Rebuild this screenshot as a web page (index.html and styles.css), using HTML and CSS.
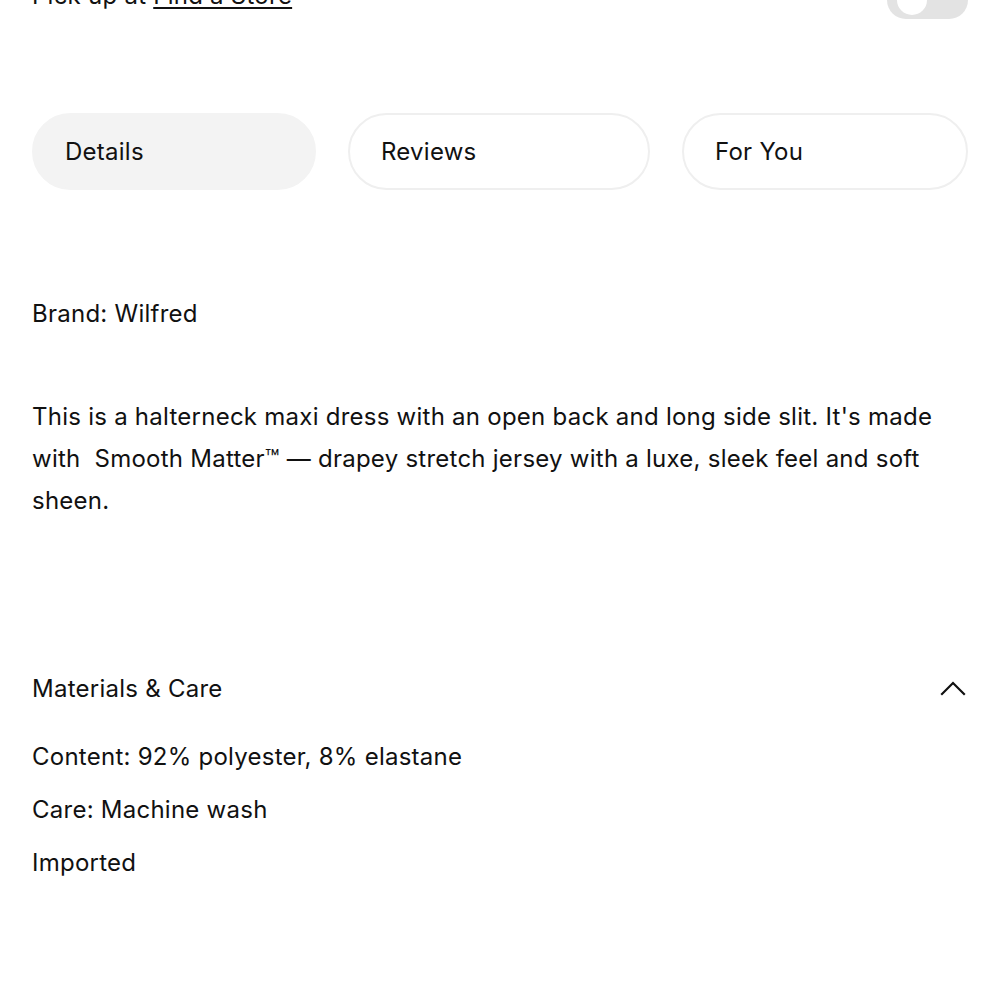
FILE: index.html
```html
<!DOCTYPE html>
<html lang="en">
<head>
<meta charset="utf-8">
<title>Product details</title>
<link rel="stylesheet" href="styles.css">
</head>
<body>
<div class="page">
  <div class="pickup">
    <span class="pickup-text">Pick up at <a class="store-link" href="#">Find a Store</a></span>
    <span class="toggle"><span class="knob"></span></span>
  </div>

  <div class="tabs">
    <button class="tab tab-active tab-details">Details</button>
    <button class="tab tab-reviews">Reviews</button>
    <button class="tab tab-foryou">For You</button>
  </div>

  <p class="brand">Brand: Wilfred</p>

  <p class="desc">This is a halterneck maxi dress with an open back and long side slit. It's made with&nbsp; Smooth Matter™ — drapey stretch jersey with a luxe, sleek feel and soft sheen.</p>

  <div class="accordion">
    <div class="acc-head">
      <span class="acc-title">Materials &amp; Care</span>
      <svg class="chev" width="26" height="16" viewBox="0 0 26 16" aria-hidden="true"><path d="M2 14 L13 3 L24 14" fill="none" stroke="#111" stroke-width="2.2" stroke-linecap="square"/></svg>
    </div>
    <ul class="acc-list">
      <li>Content: 92% polyester, 8% elastane</li>
      <li>Care: Machine wash</li>
      <li>Imported</li>
    </ul>
  </div>
</div>
</body>
</html>
```

FILE: styles.css
```css
* { box-sizing: border-box; }
html, body { margin: 0; padding: 0; background: #fff; }
body {
  font-family: "Inter", "Noto Sans", sans-serif;
  color: #111;
  font-size: 24px;
  letter-spacing: 0.25px;
}
.page {
  padding: 0 32px;
  margin-top: -19px;
}
.pickup {
  display: flex;
  justify-content: space-between;
  align-items: flex-start;
  height: 38px;
}
.pickup-text {
  line-height: 38px;
  margin-top: -4px;
}
.store-link { color: #111; text-decoration: underline; text-underline-offset: 3px; text-decoration-thickness: 2px; }
.toggle {
  width: 81px;
  height: 38px;
  border-radius: 19px;
  background: #e3e3e3;
  padding: 4px 10px;
  display: flex;
}
.knob { width: 30px; height: 30px; border-radius: 50%; background: #fff; }

.tabs {
  display: flex;
  gap: 32px;
  margin-top: 94px;
}
.tab {
  font: inherit;
  letter-spacing: inherit;
  color: #111;
  height: 77px;
  border-radius: 39px;
  border: 2px solid #efefef;
  background: #fff;
  text-align: left;
  padding: 0 31px;
}
.tab-active { background: #f3f3f3; border-color: #f3f3f3; }
.tab-details { width: 284px; }
.tab-reviews { width: 302px; }
.tab-foryou { width: 286px; }

.brand { margin: 109px 0 0; line-height: 30px; }
.desc { margin: 67px 0 0; line-height: 42px; }
.accordion { margin-top: 151px; }
.acc-head { display: flex; justify-content: space-between; align-items: center; height: 30px; }
.chev { margin-right: 2px; }
.acc-list { list-style: none; margin: 39px 0 0; padding: 0; }
.acc-list li { line-height: 30px; margin-bottom: 23px; }
```
